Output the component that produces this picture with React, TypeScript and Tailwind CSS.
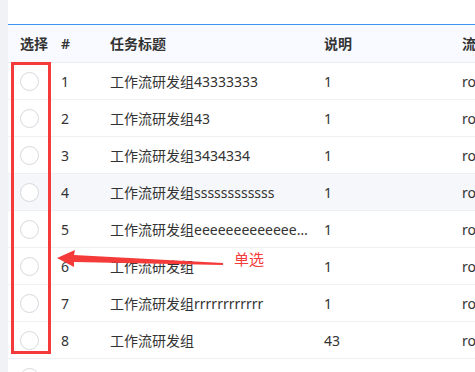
import React from 'react';

interface Row {
  id: number;
  title: string;
  desc: string;
  flow: string;
}

const rows: Row[] = [
  { id: 1, title: '工作流研发组43333333', desc: '1', flow: 'root' },
  { id: 2, title: '工作流研发组43', desc: '1', flow: 'root' },
  { id: 3, title: '工作流研发组3434334', desc: '1', flow: 'root' },
  { id: 4, title: '工作流研发组ssssssssssss', desc: '1', flow: 'root' },
  { id: 5, title: '工作流研发组eeeeeeeeeeeeeeeeeeee', desc: '1', flow: 'root' },
  { id: 6, title: '工作流研发组', desc: '1', flow: 'root' },
  { id: 7, title: '工作流研发组rrrrrrrrrrrr', desc: '1', flow: 'root' },
  { id: 8, title: '工作流研发组', desc: '43', flow: 'root' },
  { id: 9, title: '', desc: '', flow: '' },
];

const cols = 'grid grid-cols-[45px_49px_214px_138px_minmax(0,1fr)]';

const Radio = () => (
  <span className="block w-[19px] h-[19px] rounded-full border border-[#d7d9de] bg-white" />
);

export default function App() {
  return (
    <div
      className="relative flex w-[475px] h-[372px] overflow-hidden bg-white text-[14px] text-[#333]"
      style={{ fontFamily: '"Noto Sans", "Noto Sans CJK SC", sans-serif' }}
    >
      <div className="w-2 shrink-0 bg-[#f0f2f5]" />
      <div className="flex-1 min-w-0 flex flex-col">
        <div className="h-6 shrink-0" />
        <div className="border-t border-[#3c96f0]">
          {/* header */}
          <div className={`${cols} h-[38px] items-center bg-[#f8faff] border-b border-[#ebedf2] font-semibold whitespace-nowrap`}>
            <div className="pl-3">选择</div>
            <div className="pl-2">#</div>
            <div className="pl-2">任务标题</div>
            <div className="pl-2">说明</div>
            <div className="pl-2 min-w-0 overflow-hidden">流程名称</div>
          </div>

          {rows.map((r) => (
            <div
              key={r.id}
              className={`${cols} h-[37px] items-center border-b border-[#eef0f4] whitespace-nowrap ${
                r.id === 4 ? 'bg-[#f5f7fa]' : 'bg-white'
              }`}
            >
              <div className="pl-3">
                <Radio />
              </div>
              <div className="pl-2">{r.id === 9 ? '' : r.id}</div>
              <div className="px-2 min-w-0 overflow-hidden text-ellipsis">{r.title}</div>
              <div className="pl-2">{r.desc}</div>
              <div className="pl-2 min-w-0 overflow-hidden">{r.flow}</div>
            </div>
          ))}
        </div>
      </div>

      {/* annotation */}
      <div className="absolute left-[11px] top-[62px] w-[40px] h-[292px] border-[3px] border-[#f53a3a]" />
      <svg className="absolute left-0 top-0" width="475" height="372" viewBox="0 0 475 372">
        <polygon
          points="57,258 75,250 74,255 223,263 223,265 74,262 74,267"
          fill="#f53a3a"
        />
      </svg>
      <div className="absolute left-[234px] top-[250px] text-[15px] leading-[18px] text-[#f53a3a]">单选</div>
    </div>
  );
}
